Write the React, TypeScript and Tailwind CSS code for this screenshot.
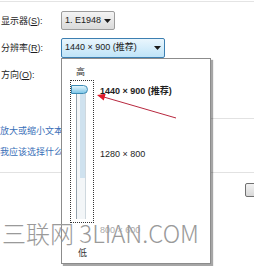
import React from 'react';

const font = "font-['Liberation_Sans','Noto_Sans_CJK_SC',sans-serif]";

function Caret() {
  return (
    <svg width="7" height="4" viewBox="0 0 7 4" className="shrink-0">
      <polygon points="0,0 7,0 3.5,4" fill="#1a1a1a" />
    </svg>
  );
}

function Label({ text, k }: { text: string; k: string }) {
  return (
    <div className="w-[61px] shrink-0 pl-[1px] text-[9px] leading-[12px] text-[#1e1e1e]">
      {text}(<span className="underline">{k}</span>):
    </div>
  );
}

export default function App() {
  return (
    <div className={`relative w-[254px] h-[266px] overflow-hidden bg-white ${font}`}>
      {/* dialog underneath */}
      <div className="flex flex-col">
        <div className="mt-[1px] h-px bg-[#e4e4e4]" />

        <div className="mt-[9px] flex h-[19px] items-center">
          <Label text="显示器" k="S" />
          <div className="flex h-[19px] w-[54px] items-center justify-between rounded-[2px] border border-[#9c9c9c] bg-gradient-to-b from-[#f4f4f4] to-[#dadada] pl-[3px] pr-[3px] text-[9px] text-[#222]">
            <span>1. E1948</span>
            <Caret />
          </div>
        </div>

        <div className="mt-[8px] flex h-[20px] items-center">
          <Label text="分辨率" k="R" />
          <div className="flex h-[20px] w-[104px] items-center justify-between rounded-[2px] border border-[#3c7fb1] bg-gradient-to-b from-[#eaf6fd] to-[#bfe4f8] pl-[3px] pr-[3px] text-[9px] text-[#222]">
            <span>1440 × 900 (推荐)</span>
            <Caret />
          </div>
        </div>

        <div className="mt-[11px] flex h-[12px] items-center">
          <Label text="方向" k="O" />
        </div>

        <div className="mt-[37px] ml-[211px] h-px bg-[#e2e2e2]" />

        <div className="mt-[6px] text-[9px] leading-[12px] text-[#3a70b8]">放大或缩小文本</div>
        <div className="mt-[9px] text-[9px] leading-[12px] text-[#3a70b8]">我应该选择什么</div>

        <div className="mt-[14px] h-px bg-[#e2e2e2]" />

        <div className="mt-[10px] ml-[245px] h-[14px] w-[16px] shrink-0 rounded-[2px] border border-[#707070] bg-gradient-to-b from-[#f2f2f2] to-[#d8d8d8]" />
      </div>

      {/* resolution popup */}
      <div className="absolute left-[61px] top-[58px] flex h-[206px] w-[150px] flex-col border border-[#8c8c8c] bg-white shadow-[2px_2px_1px_rgba(0,0,0,0.35)]">
        <div className="mt-[7px] pl-[14px] text-[9px] leading-[12px] text-[#333]">高</div>

        <div className="mt-[2px] flex items-start">
          <div className="relative ml-[8px] h-[143px] w-[24px] shrink-0 border border-dotted border-[#333]">
            <div className="absolute left-[5px] top-[7px] bottom-[3px] w-[10px] border-l border-r border-l-[#95a3ae] border-r-[#cfd8de] bg-[#f3f6f8]">
              <div className="ml-[3px] h-[90px] w-[5px] bg-[#cfe2ef]" />
            </div>
            <div className="absolute left-0 top-[4px] h-[9px] w-[17px] rounded-l-[2px] rounded-r-full border border-[#3b8bb5] bg-gradient-to-b from-[#e2f5fc] to-[#7ec6e7]" />
          </div>

          <div className="ml-[6px] flex flex-col text-[9px] leading-[12px] text-[#1e1e1e]">
            <div className="mt-[5px] font-bold">1440 × 900 (推荐)</div>
            <div className="mt-[51px]">1280 × 800</div>
            <div className="mt-[64px] text-[#aaa]">800 × 600</div>
          </div>
        </div>

        <div className="mt-[11px] pl-[16px] text-[9px] leading-[12px] text-[#333]">低</div>
      </div>

      {/* red annotation arrow */}
      <svg className="absolute left-[96px] top-[92px]" width="82" height="30" viewBox="0 0 82 30">
        <line x1="6" y1="4.5" x2="80" y2="26" stroke="#b8283f" strokeWidth="1" />
        <polygon points="1,3 9.7,1.8 7.7,8.6" fill="#e01b2b" />
      </svg>

      {/* watermark */}
      <div className="pointer-events-none absolute left-[2px] top-[221px] text-[24px] font-[300] leading-[24px] text-[#9a9a9a] whitespace-nowrap font-['Noto_Sans_CJK_SC',sans-serif]">
        三联网 3LIAN.COM
      </div>
    </div>
  );
}
